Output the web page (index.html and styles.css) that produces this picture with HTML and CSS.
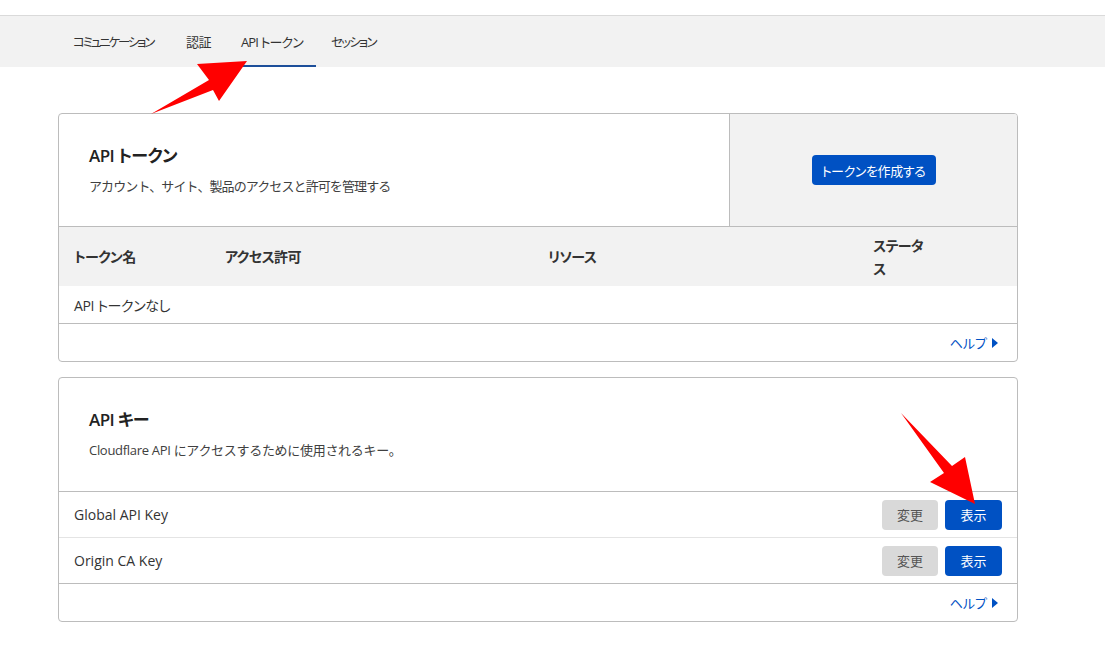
FILE: index.html
```html
<!DOCTYPE html>
<html lang="ja">
<head>
<meta charset="utf-8">
<title>API トークン</title>
<link rel="stylesheet" href="styles.css">
</head>
<body>
<div class="topgap"></div>
<nav class="tabs">
  <div class="tabs-inner">
    <a class="tab">コミュニケーション</a>
    <a class="tab">認証</a>
    <a class="tab active">API トークン</a>
    <a class="tab">セッション</a>
  </div>
</nav>

<main class="main">
  <section class="card">
    <div class="card-top">
      <div class="intro">
        <h2 class="title">API トークン</h2>
        <p class="desc">アカウント、サイト、製品のアクセスと許可を管理する</p>
      </div>
      <div class="side">
        <button class="btn btn-blue btn-create">トークンを作成する</button>
      </div>
    </div>
    <div class="thead">
      <div class="th">トークン名</div>
      <div class="th">アクセス許可</div>
      <div class="th">リソース</div>
      <div class="th th-status">ステータス</div>
      <div class="th"></div>
    </div>
    <div class="trow">API トークンなし</div>
    <div class="card-foot"><a class="help">ヘルプ<span class="tri"></span></a></div>
  </section>

  <section class="card">
    <div class="card-head">
      <h2 class="title">API キー</h2>
      <p class="desc">Cloudflare API にアクセスするために使用されるキー。</p>
    </div>
    <div class="keyrow">
      <span class="keyname">Global API Key</span>
      <div class="actions"><button class="btn btn-gray">変更</button><button class="btn btn-blue">表示</button></div>
    </div>
    <div class="keyrow last">
      <span class="keyname">Origin CA Key</span>
      <div class="actions"><button class="btn btn-gray">変更</button><button class="btn btn-blue">表示</button></div>
    </div>
    <div class="card-foot"><a class="help">ヘルプ<span class="tri"></span></a></div>
  </section>
</main>

<svg class="arrow arrow-1" width="1105" height="645" viewBox="0 0 1105 645">
  <polygon points="151,114 209,80 197,64 247,61 219,101 213,90" fill="#ff0000"/>
  <polygon points="901,413 952,466 965,457 975,504 930,482 944,473" fill="#ff0000"/>
</svg>
</body>
</html>
```
FILE: styles.css
```css
* { box-sizing: border-box; }
html, body { margin: 0; padding: 0; }
body {
  background: #fff;
  color: #313131;
  font-family: "Open Sans", "Noto Sans CJK JP", sans-serif;
  font-feature-settings: "palt";
  width: 1105px;
  height: 645px;
  overflow: hidden;
  position: relative;
}
.topgap { height: 16px; border-bottom: 1px solid #dadada; }
.tabs { background: #f2f2f2; height: 51px; }
.tabs-inner { display: flex; padding-left: 58px; height: 51px; }
.tab {
  display: flex; align-items: center;
  flex: none;
  white-space: nowrap;
  padding: 0 0 0 15px;
  font-size: 12.5px;
  letter-spacing: -2.2px;
  color: #333;
  height: 51px;
  border-bottom: 2px solid transparent;
  padding-top: 1px;
}
.tab:nth-child(1) { width: 113px; }
.tab:nth-child(2) { width: 55px; letter-spacing: -0.4px; font-size: 13px; }
.tab:nth-child(3) { width: 90px; letter-spacing: -0.9px; font-size: 13px; }
.tab:nth-child(4) { width: 80px; letter-spacing: -1.8px; }
.tab.active { border-bottom-color: #1d4f9a; }

.main { padding: 46px 0 0 58px; display: flex; flex-direction: column; gap: 15px; }
.card {
  width: 960px;
  border: 1px solid #bcbcbc;
  border-radius: 4px;
  background: #fff;
}
.card-top { display: flex; height: 113px; border-bottom: 1px solid #bcbcbc; }
.intro { flex: 1; padding: 30px 30px 0; }
.side {
  width: 288px;
  background: #f2f2f2;
  border-left: 1px solid #bcbcbc;
  display: flex; align-items: center; justify-content: center;
  border-top-right-radius: 3px;
}
.title { margin: 0; font-size: 17px; font-weight: 600; line-height: 24px; color: #222; letter-spacing: -0.6px; }
.desc { margin: 8px 0 0; font-size: 13px; line-height: 20px; color: #404040; font-feature-settings: normal; letter-spacing: -0.9px; }
.card-head { height: 114px; padding: 30px 30px 0; border-bottom: 1px solid #bcbcbc; }
.card-head .desc { letter-spacing: -0.3px; }

.btn {
  border: 0; border-radius: 4px;
  font-family: inherit; font-feature-settings: "palt";
  font-size: 13px; height: 30px; padding: 0 14px;
  cursor: pointer;
}
.btn-blue { background: #0051c3; color: #fff; }
.btn-gray { background: #d9d9d9; color: #555; }
.btn-create { width: 124px; padding: 0; margin-left: 0; margin-top: 0; letter-spacing: -0.4px; }

.thead {
  display: grid;
  grid-template-columns: 151px 323px 325px 84px 1fr;
  background: #f2f2f2;
  height: 59px;
  align-items: center;
}
.th { padding-left: 15px; font-size: 14px; font-weight: 600; color: #333; line-height: 23px; letter-spacing: -0.6px; }
.th-status { padding-right: 8px; }
.trow {
  height: 38px; display: flex; align-items: center;
  padding-left: 15px; font-size: 14px; color: #333;
  border-bottom: 1px solid #bcbcbc;
  letter-spacing: -0.4px;
}
.card-foot {
  height: 37px; display: flex; align-items: center; justify-content: flex-end;
  padding-right: 19px;
}
.help { color: #0051c3; font-size: 13px; display: flex; align-items: center; }
.tri {
  display: inline-block; margin-left: 5px;
  width: 0; height: 0;
  border-top: 5px solid transparent; border-bottom: 5px solid transparent;
  border-left: 6px solid #0051c3;
}
.keyrow {
  height: 46px; display: flex; align-items: center; justify-content: space-between;
  padding: 0 15px; border-bottom: 1px solid #e4e4e4;
}
.keyrow.last { border-bottom: 1px solid #bcbcbc; }
.keyname { font-size: 14px; color: #333; }
.actions { display: flex; gap: 7px; }
.actions .btn { width: 56px; padding: 0; }
.actions .btn-blue { width: 57px; }

.arrow { position: absolute; left: 0; top: 0; pointer-events: none; }
```
